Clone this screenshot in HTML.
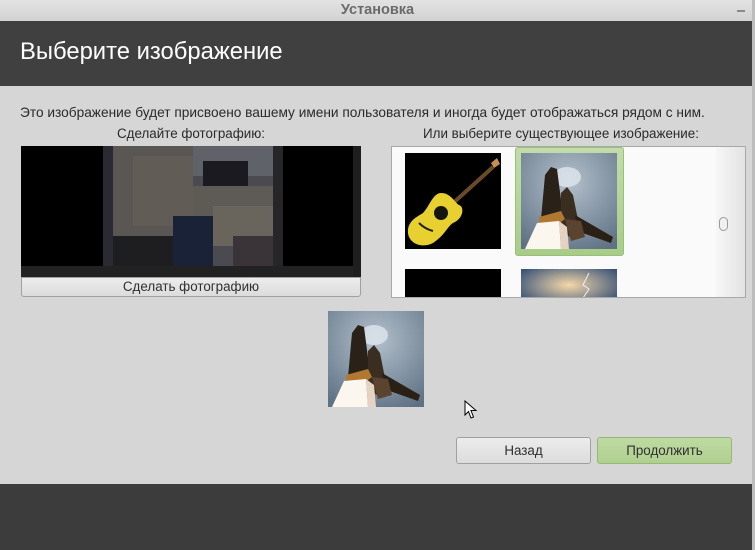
<!DOCTYPE html>
<html><head><meta charset="utf-8"><style>
*{margin:0;padding:0;box-sizing:border-box}
body{width:755px;height:550px;overflow:hidden;background:#d6d6d6;font-family:"Liberation Sans","DejaVu Sans",sans-serif;position:relative}
.abs{position:absolute}
.tb{left:0;top:0;width:755px;height:21px;background:linear-gradient(#e2e2e2,#d2d2d2);text-align:center;font-weight:bold;font-size:14.5px;color:#6a6a6a;line-height:21px}
.hd{left:0;top:21px;width:752px;height:65px;background:#404040;color:#fff;font-size:23.8px;padding-left:20px;line-height:62px}
.ft{left:0;top:484px;width:752px;height:66px;background:#3c3c3c}
.edge{left:752px;top:0;width:3px;height:550px;background:#bdbdbd}
.t{font-size:13.7px;color:#2a2a2a;white-space:nowrap}
.c{font-size:13.4px;color:#2a2a2a;white-space:nowrap;text-align:center}
.btn{border:1px solid #a0a0a0;border-radius:3px;background:linear-gradient(#ececec,#dcdcdc);text-align:center;font-size:13.4px;color:#303030}
</style></head><body>
<div class="abs tb">Установка<span class="abs" style="right:10px;top:10px;width:8px;height:2px;background:#888"></span></div>
<div class="abs hd">Выберите изображение</div>
<div class="abs t" style="left:20px;top:105px">Это изображение будет присвоено вашему имени пользователя и иногда будет отображаться рядом с ним.</div>
<div class="abs c" style="left:21px;width:340px;top:126px">Сделайте фотографию:</div>
<div class="abs c" style="left:391px;width:340px;top:126px">Или выберите существующее изображение:</div>

<div class="abs" style="left:21px;top:146px;width:340px;height:131px;background:#000;overflow:hidden">
<svg width="340" height="131" style="display:block">
<rect x="82" y="0" width="180" height="131" fill="#4a4a50"/>
<rect x="92" y="0" width="80" height="90" fill="#5a5654"/>
<rect x="112" y="10" width="60" height="70" fill="#615c56"/>
<rect x="172" y="0" width="90" height="30" fill="#60626a"/>
<rect x="182" y="15" width="45" height="25" fill="#1a1a20"/>
<rect x="172" y="40" width="90" height="50" fill="#5e5a56"/>
<rect x="192" y="60" width="60" height="40" fill="#6a655c"/>
<rect x="152" y="70" width="40" height="61" fill="#1a2238"/>
<rect x="82" y="90" width="70" height="41" fill="#1e1e20"/>
<rect x="212" y="90" width="50" height="41" fill="#3a3438"/>
<rect x="82" y="0" width="10" height="131" fill="#2a2a32"/>
<rect x="252" y="0" width="10" height="131" fill="#262628"/>
<rect x="0" y="120" width="340" height="11" fill="#222"/>
<rect x="332" y="0" width="8" height="131" fill="#1e1e1e"/>
</svg></div>
<div class="abs btn" style="left:21px;top:277px;width:340px;height:20px;line-height:18px;border-radius:0 0 3px 3px">Сделать фотографию</div>

<div class="abs" style="left:391px;top:146px;width:355px;height:152px;background:#fafafa;border:1px solid #a8a8a8;overflow:hidden">
<div class="abs" style="left:324px;top:0;width:30px;height:152px;background:linear-gradient(90deg,#f6f6f6,#e2e2e2)"></div>
<div class="abs" style="left:327px;top:70px;width:9px;height:14px;border:1px solid #999;border-radius:5px;background:#f0f0f0"></div>
<svg class="abs" style="left:13px;top:6px" width="96" height="96">
<rect width="96" height="96" fill="#000"/>
<path d="M46 52 L88 14" stroke="#6a4a2a" stroke-width="4"/>
<path d="M86 10 l6 -5 l3 6 l-6 4z" fill="#c89050"/>
<path d="M36 40 C46 40 50 50 54 52 C60 54 58 66 48 70 C42 74 40 82 28 90 C16 96 4 90 3 80 C2 68 12 64 18 60 C24 54 28 40 36 40Z" fill="#e8d030"/>
<circle cx="36" cy="60" r="7" fill="#151510"/>
<path d="M14 70 q6 6 14 8" stroke="#222" stroke-width="2" fill="none"/>
</svg>
<div class="abs" style="left:123px;top:0px;width:109px;height:109px;border:1px solid #98c078;border-radius:3px;background:linear-gradient(#c2dcaa,#a8cc88)"></div>
<svg class="abs" style="left:129px;top:6px" width="96" height="96">
<defs><radialGradient id="sk" cx="0.5" cy="0.3" r="0.8"><stop offset="0" stop-color="#b4c0cc"/><stop offset="1" stop-color="#5e7284"/></radialGradient></defs>
<rect width="96" height="96" fill="url(#sk)"/>
<ellipse cx="46" cy="24" rx="14" ry="10" fill="#dfe6ee" opacity=".8"/>
<path d="M24 22 L30 14 L36 16 L42 62 L20 66Z" fill="#2a2218"/>
<path d="M40 40 L46 34 L52 42 L58 72 L48 84 L40 72Z" fill="#3a2e20"/>
<path d="M54 62 L92 84 L90 90 L56 78Z" fill="#2a2016"/>
<path d="M44 66 l16 2 l4 16 l-14 4Z" fill="#5a4430"/>
<path d="M18 64 L40 58 L44 66 L36 72 L18 72Z" fill="#b07830"/>
<path d="M16 70 L38 68 L40 96 L4 96Z" fill="#fbf6ee"/>
<path d="M38 68 L46 74 L48 96 L40 96Z" fill="#e6d2c0"/>
</svg>
<svg class="abs" style="left:13px;top:122px" width="96" height="40"><rect width="96" height="40" fill="#000"/><ellipse cx="48" cy="32" rx="14" ry="4" fill="#8ab030"/></svg>
<svg class="abs" style="left:129px;top:122px" width="96" height="40"><defs><radialGradient id="lg" cx="0.5" cy="0.4" r="0.6"><stop offset="0" stop-color="#f4d8a8"/><stop offset="1" stop-color="#3a5478"/></radialGradient></defs><rect width="96" height="40" fill="url(#lg)"/><path d="M68 4 l-6 12 l6 4 l-8 12" stroke="#eef" fill="none"/></svg>
</div>

<svg class="abs" style="left:328px;top:311px" width="96" height="96">
<defs><radialGradient id="sk2" cx="0.5" cy="0.3" r="0.8"><stop offset="0" stop-color="#b4c0cc"/><stop offset="1" stop-color="#5e7284"/></radialGradient></defs>
<rect width="96" height="96" fill="url(#sk2)"/>
<ellipse cx="46" cy="24" rx="14" ry="10" fill="#dfe6ee" opacity=".8"/>
<path d="M24 22 L30 14 L36 16 L42 62 L20 66Z" fill="#2a2218"/>
<path d="M40 40 L46 34 L52 42 L58 72 L48 84 L40 72Z" fill="#3a2e20"/>
<path d="M54 62 L92 84 L90 90 L56 78Z" fill="#2a2016"/>
<path d="M44 66 l16 2 l4 16 l-14 4Z" fill="#5a4430"/>
<path d="M18 64 L40 58 L44 66 L36 72 L18 72Z" fill="#b07830"/>
<path d="M16 70 L38 68 L40 96 L4 96Z" fill="#fbf6ee"/>
<path d="M38 68 L46 74 L48 96 L40 96Z" fill="#e6d2c0"/>
</svg>
<svg class="abs" style="left:464px;top:400px" width="14" height="20"><path d="M1 1 L1 15 L4.5 11.5 L7 18 L9.5 17 L7 10.5 L12 10.5Z" fill="#fff" stroke="#000" stroke-width="1"/></svg>

<div class="abs btn" style="left:456px;top:437px;width:135px;height:27px;line-height:25px">Назад</div>
<div class="abs btn" style="left:597px;top:437px;width:135px;height:27px;line-height:25px;background:linear-gradient(#bedaa2,#b0d090);border-color:#94b878">Продолжить</div>

<div class="abs ft"></div>
<div class="abs edge"></div>
</body></html>
